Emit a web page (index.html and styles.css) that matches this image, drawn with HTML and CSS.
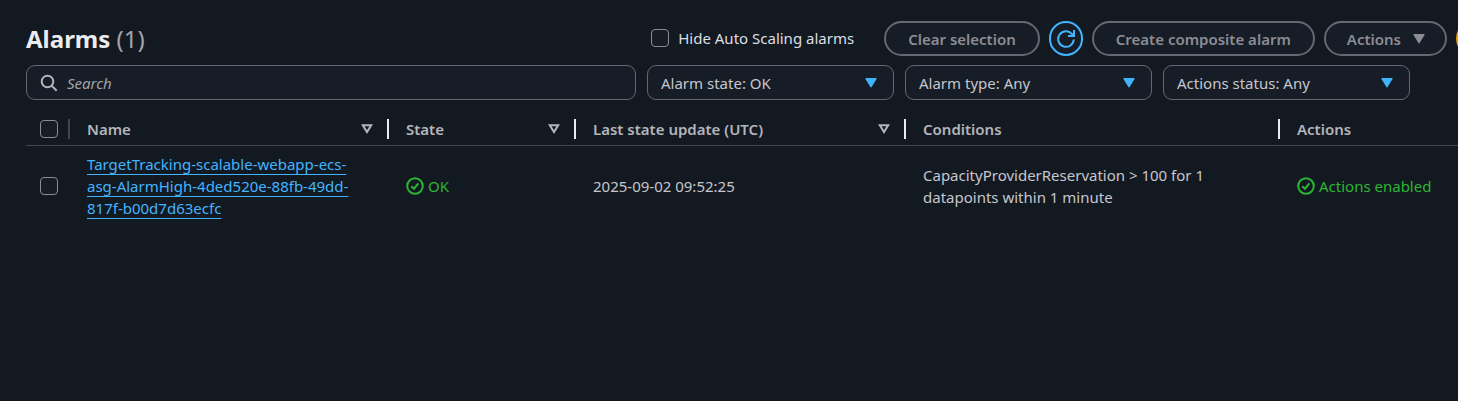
FILE: index.html
```html
<!DOCTYPE html>
<html lang="en">
<head>
<meta charset="utf-8">
<title>Alarms</title>
<link rel="stylesheet" href="styles.css">
</head>
<body>
<main class="panel">
  <header class="header">
    <h1 class="title">Alarms <span class="count">(1)</span></h1>
    <label class="hide-toggle"><input class="checkbox" type="checkbox">Hide Auto Scaling alarms</label>
    <div class="buttons">
      <button class="btn" type="button">Clear selection</button>
      <button class="btn btn-icon" type="button" aria-label="Refresh">
        <svg class="icon" viewBox="0 0 18 18" fill="none" stroke="currentColor" stroke-width="2"><path d="M16.800 9.500a7.800 7.800 0 1 1-2-5.700L16 5.200M17 0v6h-6"/></svg>
      </button>
      <button class="btn" type="button">Create composite alarm</button>
      <button class="btn btn-menu" type="button">Actions
        <svg class="caret" viewBox="0 0 12 10" fill="currentColor"><path d="M1 0h10q1 0 .5 1L6.600 9q-.6 1-1.200 0L.5 1Q0 0 1 0z"/></svg>
      </button>
      <button class="btn btn-primary" type="button" aria-label="Create alarm"></button>
    </div>
  </header>

  <div class="filters">
    <label class="search">
      <svg class="search-icon" viewBox="0 0 18 18" fill="none" stroke="currentColor" stroke-width="2"><circle cx="7.500" cy="7.500" r="5.800"/><path d="M11.700 11.700l5 5"/></svg>
      <input class="search-input" type="search" placeholder="Search" aria-label="Search">
    </label>
    <div class="filter">
      <select class="select" aria-label="Alarm state"><option>Alarm state: OK</option></select>
      <svg class="caret" viewBox="0 0 12 10" fill="currentColor"><path d="M1 0h10q1 0 .5 1L6.600 9q-.6 1-1.200 0L.5 1Q0 0 1 0z"/></svg>
    </div>
    <div class="filter">
      <select class="select" aria-label="Alarm type"><option>Alarm type: Any</option></select>
      <svg class="caret" viewBox="0 0 12 10" fill="currentColor"><path d="M1 0h10q1 0 .5 1L6.600 9q-.6 1-1.200 0L.5 1Q0 0 1 0z"/></svg>
    </div>
    <div class="filter">
      <select class="select" aria-label="Actions status"><option>Actions status: Any</option></select>
      <svg class="caret" viewBox="0 0 12 10" fill="currentColor"><path d="M1 0h10q1 0 .5 1L6.600 9q-.6 1-1.200 0L.5 1Q0 0 1 0z"/></svg>
    </div>
  </div>

  <table class="table">
    <colgroup>
      <col class="col-check"><col class="col-name"><col class="col-state"><col class="col-update"><col class="col-conditions"><col class="col-actions">
    </colgroup>
    <thead>
      <tr>
        <th class="check-cell"><div class="head head-muted"><input class="checkbox" type="checkbox" aria-label="Select all alarms"></div></th>
        <th><div class="head">Name<svg class="sort" viewBox="0 0 12 10" fill="none" stroke="currentColor" stroke-width="2"><path d="M1.800 1.200h8.400L6 8z"/></svg></div></th>
        <th><div class="head">State<svg class="sort" viewBox="0 0 12 10" fill="none" stroke="currentColor" stroke-width="2"><path d="M1.800 1.200h8.400L6 8z"/></svg></div></th>
        <th><div class="head">Last state update (UTC)<svg class="sort" viewBox="0 0 12 10" fill="none" stroke="currentColor" stroke-width="2"><path d="M1.800 1.200h8.400L6 8z"/></svg></div></th>
        <th><div class="head">Conditions</div></th>
        <th><div class="head head-last">Actions</div></th>
      </tr>
    </thead>
    <tbody>
      <tr>
        <td class="check-cell"><input class="checkbox" type="checkbox" aria-label="Select alarm"></td>
        <td><a class="link" href="#">TargetTracking-scalable-webapp-ecs-<wbr>asg-AlarmHigh-4ded520e-88fb-49dd-<wbr>817f-b00d7d63ecfc</a></td>
        <td><span class="status"><svg class="icon" viewBox="0 0 18 18" fill="none" stroke="currentColor" stroke-width="2"><circle cx="9" cy="9" r="7.800"/><path d="M5.300 9.200l2.700 2.500 4.400-5.400"/></svg>OK</span></td>
        <td>2025-09-02 09:52:25</td>
        <td>CapacityProviderReservation &gt; 100 for 1 datapoints within 1 minute</td>
        <td><span class="status"><svg class="icon" viewBox="0 0 18 18" fill="none" stroke="currentColor" stroke-width="2"><circle cx="9" cy="9" r="7.800"/><path d="M5.300 9.200l2.700 2.500 4.400-5.400"/></svg>Actions enabled</span></td>
      </tr>
    </tbody>
  </table>
</main>
</body>
</html>
```
FILE: styles.css
```css
* { box-sizing: border-box; }

body {
  margin: 0;
  min-height: 100vh;
  background: #131920;
  color: #c6c6cd;
  font: 15px/22px "Noto Sans", "Open Sans", sans-serif;
}

button, input, select { font: inherit; }

.panel {
  padding: 21px 0 0 26px;
  overflow: hidden;
}

.header {
  display: flex;
  align-items: center;
  margin-bottom: 9px;
}

.title {
  flex: 1;
  margin: 0;
  color: #ebebf0;
  font-size: 24px;
  font-weight: 700;
  line-height: 35px;
}

.count { color: #a4a4ad; font-weight: 400; }

.hide-toggle {
  display: flex;
  align-items: center;
  gap: 9px;
  margin-right: 30px;
  padding-bottom: 2px;
  color: #dedee3;
  white-space: nowrap;
}

.checkbox {
  appearance: none;
  flex: none;
  width: 18px;
  height: 18px;
  margin: 0;
  border: 1px solid #8c8c94;
  border-radius: 4px;
  background: #161d26;
}

.buttons {
  display: flex;
  flex: none;
  gap: 9px;
  margin-right: -142px;
}

.btn {
  height: 35px;
  padding: 0 22px;
  border: 2px solid #656871;
  border-radius: 18px;
  background: #161d26;
  color: #8c8c94;
  font-weight: 600;
  white-space: nowrap;
}

.btn-icon {
  display: grid;
  place-items: center;
  width: 34px;
  padding: 0;
  border-color: #42b4ff;
  color: #42b4ff;
}

.btn-menu {
  display: flex;
  align-items: center;
  gap: 12px;
  padding: 0 20px 0 21px;
}

.btn-primary {
  width: 144px;
  border-color: #ff9900;
  background: #ff9900;
}

.icon { flex: none; width: 18px; height: 18px; }

.caret { flex: none; width: 12px; height: 10px; }

.filters {
  display: flex;
  gap: 11px;
  padding-right: 48px;
}

.search, .select {
  height: 35px;
  border: 1px solid #656871;
  border-radius: 9px;
  background: #161d26;
}

.search {
  display: flex;
  flex: 1;
  align-items: center;
  gap: 9px;
  padding: 0 13px;
}

.search-icon { flex: none; width: 18px; height: 18px; color: #b4b4bb; }

.search-input {
  flex: 1;
  min-width: 0;
  padding: 0;
  border: 0;
  outline: 0;
  background: none;
  color: #c6c6cd;
}

.search-input::placeholder { color: #a4a4ad; font-style: italic; opacity: 1; }

.filter {
  position: relative;
  flex: 0 1 247px;
}

.select {
  appearance: none;
  width: 100%;
  padding: 0 36px 0 13px;
  color: #c6c6cd;
}

.filter .caret {
  position: absolute;
  top: 13px;
  right: 17px;
  color: #42b4ff;
  pointer-events: none;
}

.table {
  width: calc(100% + 20px);
  margin-top: 12px;
  border-collapse: collapse;
  table-layout: fixed;
}

.col-check { width: 44px; }
.col-name { width: 319px; }
.col-state { width: 187px; }
.col-update { width: 330px; }
.col-conditions { width: 374px; }

.table th {
  padding: 7px 0 6px;
  border-bottom: 1px solid #424650;
  color: #b4b4bb;
  font-weight: 600;
  text-align: left;
}

.head {
  display: flex;
  align-items: center;
  justify-content: space-between;
  height: 20px;
  padding: 0 14px 0 17px;
  border-right: 2px solid #ebebf0;
}

.head-muted { padding: 0 0 0 14px; border-color: #424650; }
.head-last { border-right: 0; }

.sort { flex: none; width: 12px; height: 10px; }

.table td { padding: 7px 17px; }

.table .check-cell { padding-left: 0; padding-right: 0; }

.table td .checkbox { display: block; margin-left: 14px; }

.link {
  color: #42b4ff;
  text-decoration: underline #42b4ff 1px;
  text-underline-offset: 4px;
  text-decoration-skip-ink: none;
}

.status {
  display: flex;
  align-items: center;
  gap: 4px;
  color: #2bb534;
  white-space: nowrap;
}
```
